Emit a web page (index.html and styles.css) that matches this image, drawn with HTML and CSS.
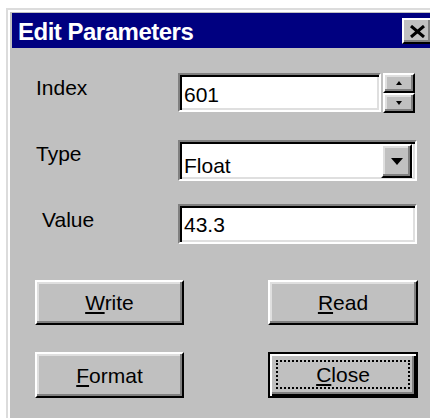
FILE: index.html
```html
<!DOCTYPE html>
<html lang="en">
<head>
<meta charset="utf-8">
<title>Edit Parameters</title>
<link rel="stylesheet" href="styles.css">
</head>
<body>
<div class="window">
  <div class="titlebar">
    <span class="title">Edit Parameters</span>
    <div class="title-close">
      <svg width="17" height="13" viewBox="0 0 17 13"><path d="M2 1 L15 12 M15 1 L2 12" stroke="#000" stroke-width="3" fill="none"/></svg>
    </div>
  </div>
  <div class="content">
    <div class="row row-index">
      <span class="label">Index</span>
      <div class="field field-index"><span class="field-text">601</span></div>
      <div class="spin">
        <div class="spin-btn"><svg width="6" height="4" viewBox="0 0 6 4"><polygon points="3,0 6,4 0,4" fill="#000"/></svg></div>
        <div class="spin-btn"><svg width="6" height="4" viewBox="0 0 6 4"><polygon points="0,0 6,0 3,4" fill="#000"/></svg></div>
      </div>
    </div>
    <div class="row row-type">
      <span class="label label-type">Type</span>
      <div class="field combo">
        <span class="field-text combo-text">Float</span>
        <div class="combo-btn"><svg width="12" height="7" viewBox="0 0 12 7"><polygon points="0,0 12,0 6,7" fill="#000"/></svg></div>
      </div>
    </div>
    <div class="row row-value">
      <span class="label label-value">Value</span>
      <div class="field field-value"><span class="field-text">43.3</span></div>
    </div>
    <div class="buttons">
      <div class="btn"><span><u>W</u>rite</span></div>
      <div class="btn"><span><u>R</u>ead</span></div>
      <div class="btn"><span><u>F</u>ormat</span></div>
      <div class="btn btn-default"><span class="focus"><span><u>C</u>lose</span></span></div>
    </div>
  </div>
</div>
</body>
</html>
```

FILE: styles.css
```css
* { box-sizing: border-box; }

html, body {
  margin: 0;
  width: 430px;
  height: 418px;
  overflow: hidden;
  background: #fff;
}

body {
  font-family: "Liberation Sans", Arial, sans-serif;
  font-size: 21px;
  color: #000;
}

/* dialog frame */
.window {
  margin: 8px 0 0 6px;
  width: 440px;
  height: 430px;
  background: #c0c0c0;
  border-top: 2px solid #dcdcdc;
  border-left: 2px solid #dcdcdc;
  box-shadow: inset 2px 2px #fff;
  padding: 3px 0 0 4px;
}

.titlebar {
  height: 35px;
  background: #000080;
  display: flex;
  align-items: center;
  justify-content: space-between;
  padding-left: 6px;
}

.title {
  color: #fff;
  font-weight: bold;
  font-size: 24px;
  letter-spacing: -0.5px;
  line-height: 24px;
  padding-top: 3px;
}

.title-close {
  width: 30px;
  height: 26px;
  margin-right: 14px;
  padding-top: 2px;
  background: #c0c0c0;
  border: 2px solid;
  border-color: #fff #000 #000 #fff;
  box-shadow: inset -2px -2px #808080;
  display: flex;
  align-items: center;
  justify-content: center;
}

.title-close svg { display: block; }

/* form rows */
.content { padding-left: 24px; }

.row {
  display: flex;
  align-items: flex-start;
}

.row-index { margin-top: 25px; }
.row-type { margin-top: 27px; }
.row-value { margin-top: 23px; }

.label {
  width: 142px;
  flex: none;
  line-height: 25px;
  padding-top: 2px;
}

.label-type { padding-top: 1px; }
.label-value { padding-left: 6px; padding-top: 3px; }

/* sunken edit fields */
.field {
  background: #fff;
  border: 2px solid;
  border-color: #808080 #fff #fff #808080;
  box-shadow: inset 2px 2px #000, inset -2px -2px #dfdfdf;
  padding-left: 4px;
}

.field-text {
  display: block;
  line-height: 25px;
}

.field-index {
  width: 203px;
  height: 39px;
  padding-top: 7px;
}

.field-value {
  width: 239px;
  height: 40px;
  padding-top: 6px;
}

/* spinner */
.spin {
  margin-left: 2px;
  width: 32px;
  height: 40px;
  display: flex;
  flex-direction: column;
}

.spin-btn,
.combo-btn,
.btn {
  background: #c0c0c0;
  border: 2px solid;
  border-color: #fff #000 #000 #fff;
  box-shadow: inset -2px -2px #808080, inset 2px 2px #dfdfdf;
  display: flex;
  align-items: center;
  justify-content: center;
}

.spin-btn { flex: 1; }
.spin-btn svg, .combo-btn svg { display: block; }

/* drop-down list */
.combo {
  width: 239px;
  height: 41px;
  display: flex;
  padding: 2px 3px 1px 4px;
}

.combo-text {
  flex: 1;
  padding-top: 9px;
}

.combo-btn {
  width: 31px;
  flex: none;
}

/* push buttons */
.buttons {
  display: grid;
  grid-template-columns: 149px 150px;
  grid-template-rows: 45px 46px;
  column-gap: 84px;
  row-gap: 27px;
  margin-top: 36px;
  margin-left: -1px;
}

.btn { line-height: 25px; }

.btn u, .focus u {
  text-decoration-thickness: 2px;
  text-underline-offset: 2px;
}

.btn-default {
  border-color: #000;
  box-shadow: inset 2px 2px #fff, inset -2px -2px #000, inset -4px -4px #808080;
  padding: 6px 6px 7px;
  align-items: stretch;
}

.focus {
  flex: 1;
  border: 2px dotted #000;
  display: flex;
  align-items: center;
  justify-content: center;
}
```
